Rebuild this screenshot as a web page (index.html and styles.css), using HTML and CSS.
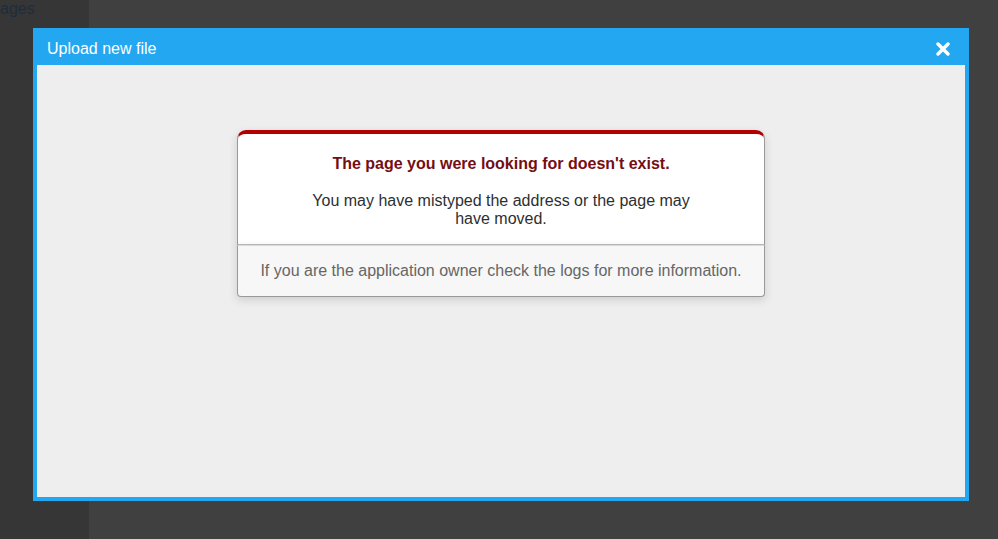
FILE: index.html
```html
<!DOCTYPE html>
<html>
<head>
<meta charset="utf-8">
<link rel="stylesheet" href="styles.css">
</head>
<body>
<div class="page">
  <aside class="sidebar"><span class="side-link">ages</span></aside>
  <main class="main"></main>
</div>
<div class="modal">
  <div class="modal-header">
    <span class="modal-title">Upload new file</span>
    <button class="modal-close" aria-label="Close">
      <svg width="14" height="14" viewBox="0 0 14 14"><path d="M2 2 L12 12 M12 2 L2 12" stroke="#fff" stroke-width="3.4" stroke-linecap="round"/></svg>
    </button>
  </div>
  <div class="modal-body">
    <div class="dialog">
      <div class="dialog-main">
        <h1 class="dialog-title">The page you were looking for doesn't exist.</h1>
        <p class="dialog-text">You may have mistyped the address or the page may have moved.</p>
      </div>
      <p class="dialog-foot">If you are the application owner check the logs for more information.</p>
    </div>
  </div>
</div>
</body>
</html>
```
FILE: styles.css
```css
html, body {
  margin: 0;
  height: 100%;
}
body {
  background: #404040;
  font-family: "Liberation Sans", Arial, sans-serif;
  overflow: hidden;
}
.page {
  display: flex;
  height: 100%;
}
.sidebar {
  width: 89px;
  background: #363636;
  flex: none;
}
.side-link {
  display: block;
  font-size: 16px;
  line-height: 18px;
  color: #1e2d3c;
  padding-top: 0;
}
.main {
  flex: 1;
  background: #404040;
}
.modal {
  position: absolute;
  left: 33px;
  top: 28px;
  width: 936px;
  height: 473px;
  box-sizing: border-box;
  background: #23a7f1;
  padding: 0 4px 4px;
  display: flex;
  flex-direction: column;
}
.modal-header {
  height: 37px;
  display: flex;
  align-items: center;
  justify-content: space-between;
  padding: 0 15px 0 10px;
  flex: none;
}
.modal-title {
  color: #fff;
  font-size: 16px;
  margin-top: 4px;
}
.modal-close {
  background: none;
  border: 0;
  padding: 0;
  width: 14px;
  height: 14px;
  display: flex;
  margin-top: 4px;
}
.modal-body {
  flex: 1;
  background: #eeeeee;
  text-align: center;
  color: #2e2f30;
  overflow: hidden;
}
.dialog {
  width: 528px;
  margin: 65px auto 0;
}
.dialog-main {
  border: 1px solid #ccc;
  border-right-color: #999;
  border-left-color: #999;
  border-bottom-color: #bbb;
  border-top: 4px solid #b00100;
  border-top-left-radius: 9px;
  border-top-right-radius: 9px;
  background: #fff;
  padding: 7px 12% 0;
  box-shadow: 0 3px 8px rgba(50, 50, 50, 0.17);
}
.dialog-title {
  font-size: 16px;
  color: #730e15;
  line-height: 1.5em;
  margin: 10.72px 0;
}
.dialog-text {
  font-size: 16px;
  margin: 16px 0;
}
.dialog-foot {
  margin: 0 0 16px;
  padding: 16px;
  font-size: 16px;
  background: #f7f7f7;
  border: 1px solid #ccc;
  border-right-color: #999;
  border-left-color: #999;
  border-bottom-color: #999;
  border-top-color: #dadada;
  border-bottom-left-radius: 4px;
  border-bottom-right-radius: 4px;
  color: #666;
  box-shadow: 0 3px 8px rgba(50, 50, 50, 0.17);
}
```
